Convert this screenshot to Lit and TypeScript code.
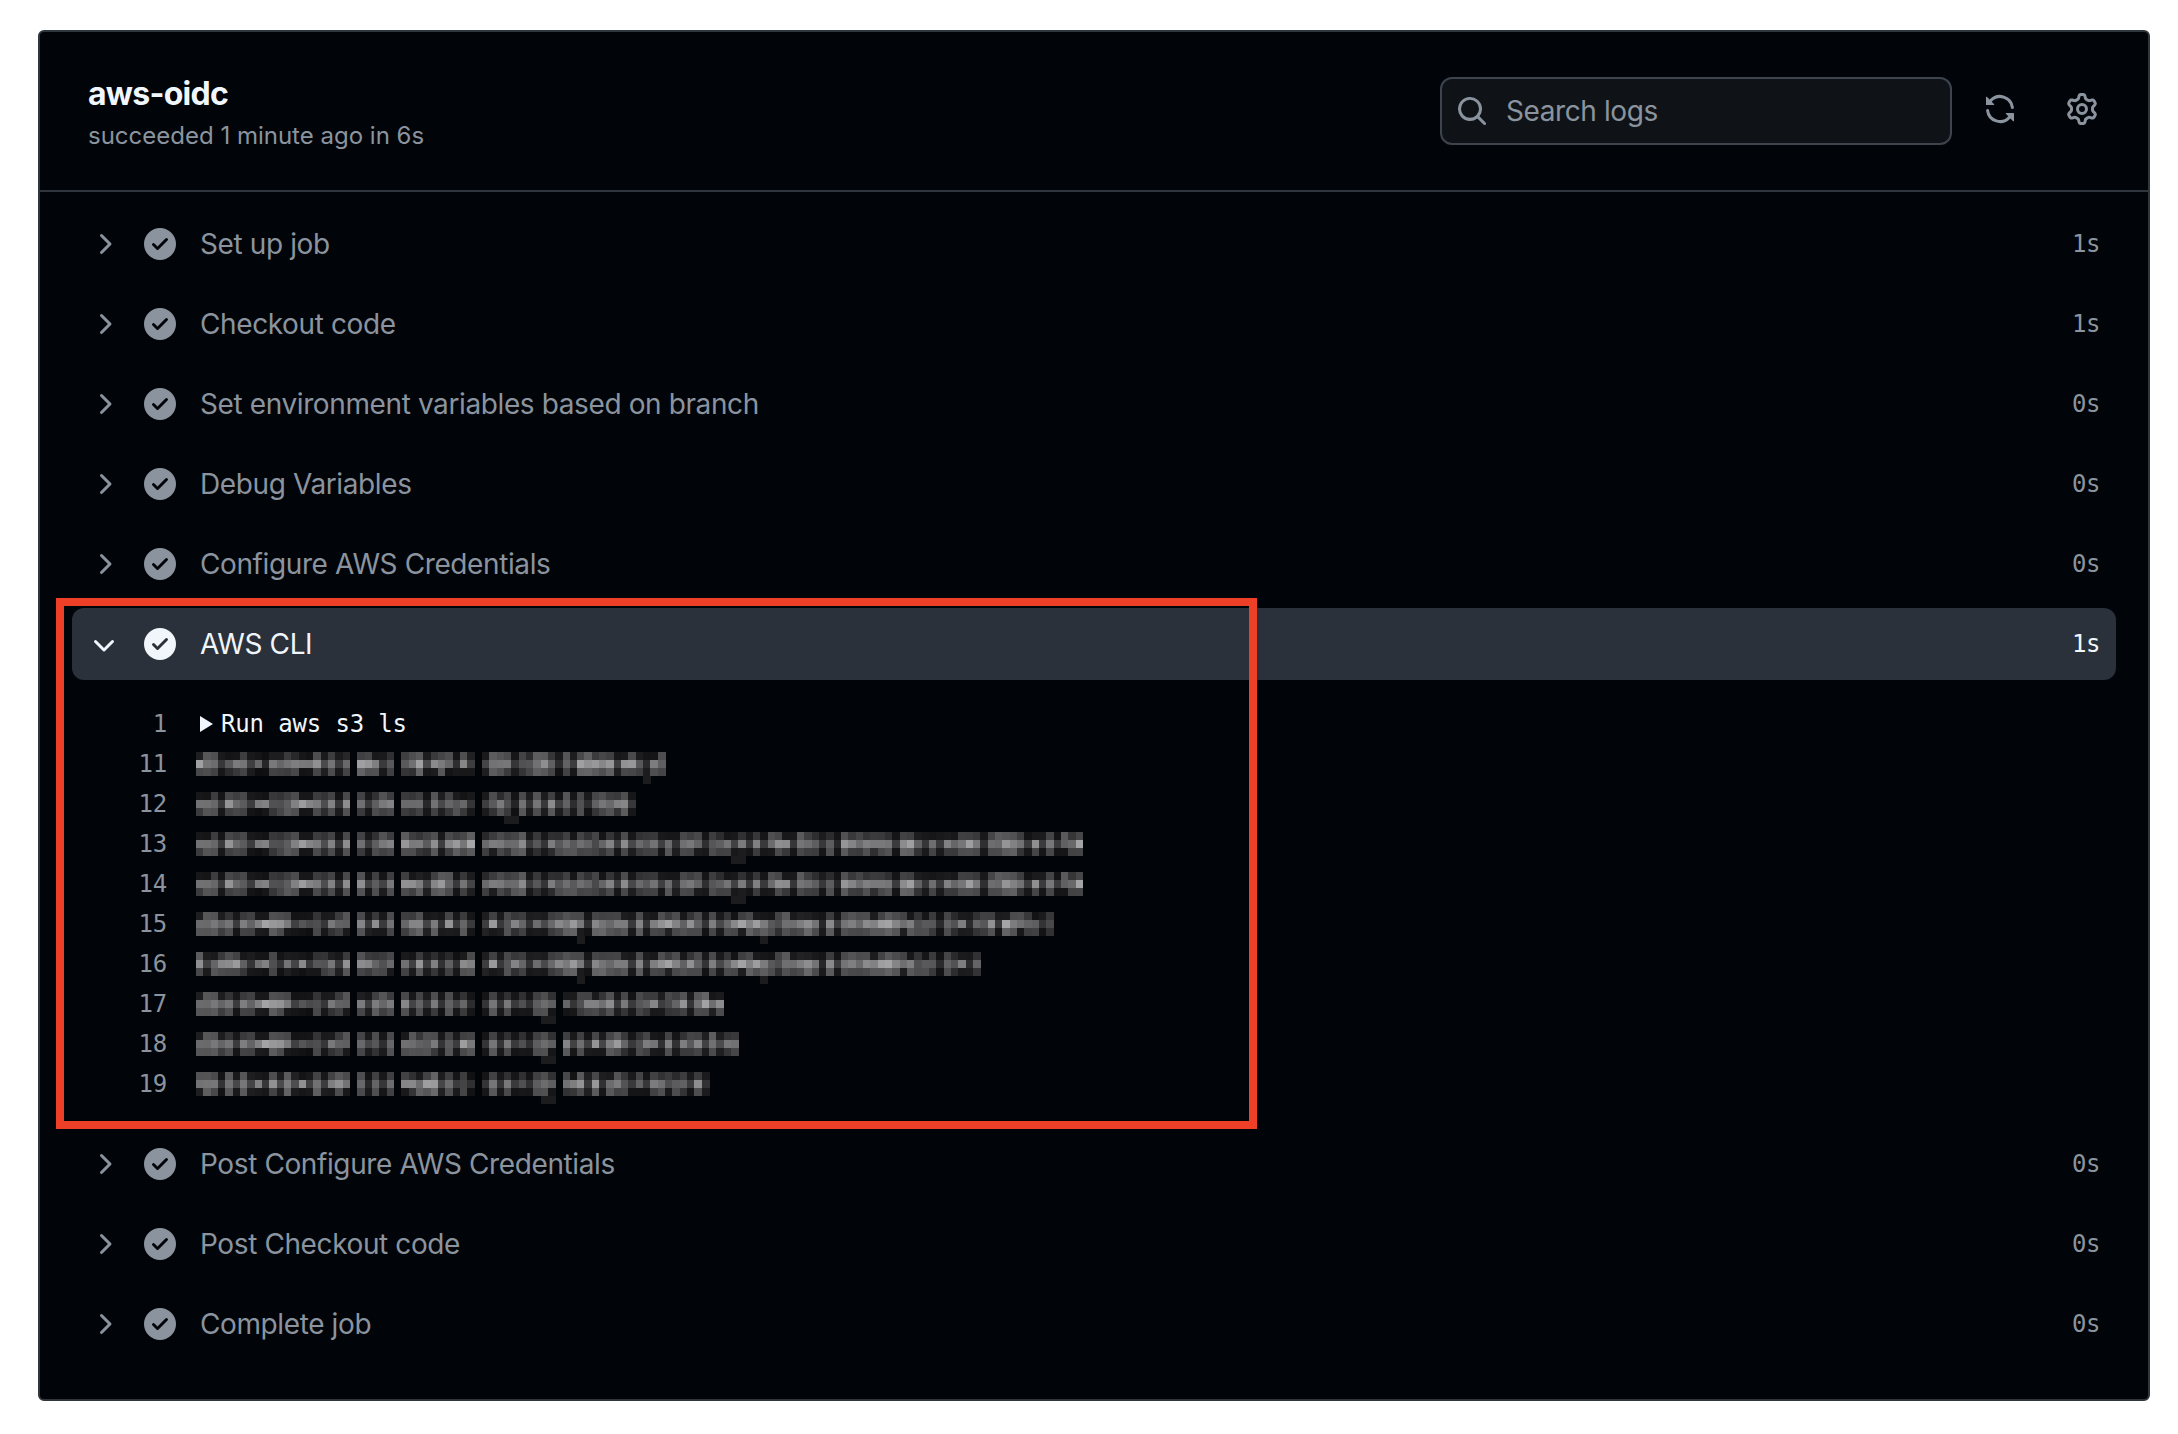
import { LitElement, html, css, svg } from "lit";
import { customElement } from "lit/decorators.js";

const P = {
  check: "M8 16A8 8 0 1 1 8 0a8 8 0 0 1 0 16Zm3.78-9.72a.751.751 0 0 0-.018-1.042.751.751 0 0 0-1.042-.018L6.75 9.19 5.28 7.72a.751.751 0 0 0-1.042.018.751.751 0 0 0-.018 1.042l2 2a.75.75 0 0 0 1.06 0Z",
  right: "M6.22 3.22a.75.75 0 0 1 1.06 0l4.25 4.25a.75.75 0 0 1 0 1.06l-4.25 4.25a.751.751 0 0 1-1.042-.018.751.751 0 0 1-.018-1.042L9.94 8 6.22 4.28a.75.75 0 0 1 0-1.06Z",
  down: "M12.78 5.22a.749.749 0 0 1 0 1.06l-4.25 4.25a.749.749 0 0 1-1.06 0L3.22 6.28a.749.749 0 1 1 1.06-1.06L8 8.939l3.72-3.719a.749.749 0 0 1 1.06 0Z",
  search: "M10.68 11.74a6 6 0 0 1-7.922-8.982 6 6 0 0 1 8.982 7.922l3.04 3.04a.749.749 0 0 1-.326 1.275.749.749 0 0 1-.734-.215ZM11.5 7a4.499 4.499 0 1 0-8.997 0A4.499 4.499 0 0 0 11.5 7Z",
  sync: "M1.705 8.005a.75.75 0 0 1 .834.656 5.5 5.5 0 0 0 9.592 2.97l-1.204-1.204a.25.25 0 0 1 .177-.427h3.646a.25.25 0 0 1 .25.25v3.646a.25.25 0 0 1-.427.177l-1.38-1.38A7.002 7.002 0 0 1 1.05 8.84a.75.75 0 0 1 .656-.834ZM8 2.5a5.487 5.487 0 0 0-4.131 1.869l1.204 1.204A.25.25 0 0 1 4.896 6H1.25A.25.25 0 0 1 1 5.75V2.104a.25.25 0 0 1 .427-.177l1.38 1.38A7.002 7.002 0 0 1 14.95 7.16a.75.75 0 0 1-1.49.178A5.5 5.5 0 0 0 8 2.5Z",
  gear: "M8 0a8.2 8.2 0 0 1 .701.031C9.444.095 9.99.645 10.16 1.29l.288 1.107c.018.066.079.158.212.224.231.114.454.243.668.386.123.082.233.09.299.071l1.103-.303c.644-.176 1.392.021 1.82.63.27.385.506.792.704 1.218.315.675.111 1.422-.364 1.891l-.814.806c-.049.048-.098.147-.088.294.016.257.016.515 0 .772-.01.147.038.246.088.294l.814.806c.475.469.679 1.216.364 1.891a7.977 7.977 0 0 1-.704 1.217c-.428.61-1.176.807-1.82.63l-1.102-.302c-.067-.019-.177-.011-.3.071a5.909 5.909 0 0 1-.668.386c-.133.066-.194.158-.211.224l-.29 1.106c-.168.646-.715 1.196-1.458 1.26a8.006 8.006 0 0 1-1.402 0c-.743-.064-1.289-.614-1.458-1.26l-.289-1.106c-.018-.066-.079-.158-.212-.224a5.738 5.738 0 0 1-.668-.386c-.123-.082-.233-.09-.299-.071l-1.103.303c-.644.176-1.392-.021-1.82-.63a8.12 8.12 0 0 1-.704-1.218c-.315-.675-.111-1.422.363-1.891l.815-.806c.05-.048.098-.147.088-.294a6.214 6.214 0 0 1 0-.772c.01-.147-.038-.246-.088-.294l-.815-.806C.635 6.045.431 5.298.746 4.623a7.92 7.92 0 0 1 .704-1.217c.428-.61 1.176-.807 1.82-.63l1.102.302c.067.019.177.011.3-.071.214-.143.437-.272.668-.386.133-.066.194-.158.211-.224l.29-1.106C6.009.645 6.556.095 7.299.03 7.53.01 7.764 0 8 0Zm-.571 1.525c-.036.003-.108.036-.137.146l-.289 1.105c-.147.561-.549.967-.998 1.189-.173.086-.34.183-.5.29-.417.278-.97.423-1.529.27l-1.103-.303c-.109-.03-.175.016-.195.045-.22.312-.412.644-.573.99-.014.031-.021.11.059.19l.815.806c.411.406.562.957.53 1.456a4.709 4.709 0 0 0 0 .582c.032.499-.119 1.05-.53 1.456l-.815.806c-.081.08-.073.159-.059.19.162.346.353.677.573.989.02.03.085.076.195.046l1.102-.303c.56-.153 1.113-.008 1.53.27.161.107.328.204.501.29.447.222.85.629.997 1.189l.289 1.105c.029.109.101.143.137.146a6.6 6.6 0 0 0 1.142 0c.036-.003.108-.036.137-.146l.289-1.105c.147-.561.549-.967.998-1.189.173-.086.34-.183.5-.29.417-.278.97-.423 1.529-.27l1.103.303c.109.029.175-.016.195-.045.22-.313.411-.644.573-.99.014-.031.021-.11-.059-.19l-.815-.806c-.411-.406-.562-.957-.53-1.456a4.709 4.709 0 0 0 0-.582c-.032-.499.119-1.05.53-1.456l.815-.806c.081-.08.073-.159.059-.19a6.464 6.464 0 0 0-.573-.989c-.02-.03-.085-.076-.195-.046l-1.102.303c-.56.153-1.113.008-1.53-.27a4.44 4.44 0 0 0-.501-.29c-.447-.222-.85-.629-.997-1.189l-.289-1.105c-.029-.11-.101-.143-.137-.146a6.6 6.6 0 0 0-1.142 0ZM11 8a3 3 0 1 1-6 0 3 3 0 0 1 6 0ZM9.5 8a1.5 1.5 0 1 0-3.001.001A1.5 1.5 0 0 0 9.5 8Z",
};

const icon = (d: string, cls: string) =>
  html`<svg class=${cls} viewBox="0 0 16 16" fill="currentColor"><path d=${d}></path></svg>`;

const CW = 7.33;
const CH = 8;
const START = 196;

type Seg = [number, number, number];
interface Blur { n: string; segs: Seg[]; desc: number[]; }

const time = (a: number, b: number, c: number): Seg[] => [
  [196, 348, a],
  [356, 395, b],
  [404, 476, c],
];

const blurs: Blur[] = [
  { n: "11", segs: [...time(3, 11, 12), [484, 668, 21]], desc: [640] },
  { n: "12", segs: [...time(1, 13, 14), [484, 636, 22]], desc: [509, 502] },
  { n: "13", segs: [...time(1, 13, 15), [484, 1084, 23]], desc: [738, 731] },
  { n: "14", segs: [...time(1, 16, 17), [484, 1084, 23]], desc: [738, 731] },
  { n: "15", segs: [...time(2, 18, 19), [484, 1052, 24]], desc: [575, 760] },
  { n: "16", segs: [...time(4, 20, 25), [484, 981, 24]], desc: [575, 760] },
  { n: "17", segs: [...time(2, 26, 27), [484, 556, 28], [564, 724, 29]], desc: [545, 538] },
  { n: "18", segs: [...time(2, 30, 31), [484, 556, 28], [564, 739, 32]], desc: [545, 538] },
  { n: "19", segs: [...time(5, 33, 34), [484, 556, 28], [564, 707, 35]], desc: [545, 538] },
];

const rnd = (a: number, b: number, c: number) => {
  const v = Math.sin(a * 127.1 + b * 311.7 + c * 74.7) * 43758.5453;
  return v - Math.floor(v);
};

const cell = (col: number, row: number, g: number) =>
  svg`<rect x=${(col * CW).toFixed(2)} y=${row * CH} width=${CW + 0.4} height=${CH}
    fill=${`rgb(${g},${g},${g + 3})`}></rect>`;

/* Hyphen columns of the date: only the middle band carries any ink there. */
const isHyphen = (c: number) => c === 8 || c === 9 || c === 14 || c === 15;

function mosaic(b: Blur) {
  const cells: unknown[] = [];
  for (const [from, to, seed] of b.segs) {
    const c0 = Math.round((from - START) / CW);
    const c1 = Math.round((to - START) / CW);
    const inDate = c0 === 0;
    for (let c = c0; c < c1; c++) {
      const charTone = rnd(seed, Math.floor(c / 2), 9);
      const gapCol = c % 2 === 1 && rnd(seed, c, 7) < 0.55;
      for (let r = 0; r < 3; r++) {
        const v = 0.55 * rnd(seed, c, r) + 0.45 * charTone;
        let g: number;
        if (r === 1) {
          g = gapCol ? 34 + v * 45 : 66 + v * 105;
        } else if (inDate && isHyphen(c)) {
          g = 14 + v * 14;
        } else if (gapCol || rnd(seed, c, r + 5) < 0.16) {
          g = 16 + v * 18;
        } else {
          g = (r === 0 ? 36 : 40) + v * 66;
        }
        cells.push(cell(c, r, Math.round(g)));
      }
    }
  }
  for (const x of b.desc) cells.push(cell(Math.round((x - START) / CW), 3, 28));
  const w = Math.ceil(Math.max(...b.segs.map((s) => s[1])) - START + 4);
  return html`<svg class="blur" width=${w} height="32" viewBox="0 0 ${w} 32" shape-rendering="crispEdges">${cells}</svg>`;
}

const before: [string, string][] = [
  ["Set up job", "1s"],
  ["Checkout code", "1s"],
  ["Set environment variables based on branch", "0s"],
  ["Debug Variables", "0s"],
  ["Configure AWS Credentials", "0s"],
];
const after: [string, string][] = [
  ["Post Configure AWS Credentials", "0s"],
  ["Post Checkout code", "0s"],
  ["Complete job", "0s"],
];

@customElement("app-root")
export class AppRoot extends LitElement {
  static styles = css`
    :host {
      display: block;
      position: relative;
      background: #fff;
      padding: 30px 28px 33px 38px;
      font-family: Inter, "Liberation Sans", sans-serif;
      color: #8b949e;
    }
    .card {
      background: #010409;
      border: 2px solid #30363d;
      border-radius: 6px;
      height: 1371px;
      box-sizing: border-box;
    }
    .head {
      height: 160px;
      box-sizing: border-box;
      border-bottom: 2px solid #30363d;
      display: flex;
      align-items: center;
      padding: 0 50px 0 48px;
    }
    .titles {
      flex: 1;
      margin-top: 8px;
    }
    .title {
      font-size: 32px;
      line-height: 40px;
      font-weight: 700;
      color: #f0f6fc;
      letter-spacing: -0.75px;
    }
    .sub {
      font-size: 24px;
      line-height: 42px;
      padding-top: 1px;
      letter-spacing: 0;
    }
    .search {
      width: 512px;
      height: 68px;
      box-sizing: border-box;
      background: #0f1318;
      border: 2px solid #3d444d;
      border-radius: 12px;
      display: flex;
      align-items: center;
      padding-left: 14px;
      gap: 18px;
      font-size: 28px;
      letter-spacing: -0.4px;
    }
    .i32 {
      width: 32px;
      height: 32px;
      flex: none;
      display: block;
    }
    .lower {
      position: relative;
      top: 2px;
    }
    .acts {
      display: flex;
      margin-left: 32px;
      gap: 50px;
      margin-bottom: 4px;
    }
    .list {
      padding: 16px 32px 0;
    }
    .row {
      height: 72px;
      margin-bottom: 8px;
      border-radius: 12px;
      display: flex;
      align-items: center;
      padding: 0 16px 0 16px;
      gap: 24px;
      font-size: 28px;
      letter-spacing: -0.39px;
    }
    .row.on {
      background: #2b313b;
      color: #f0f6fc;
      margin-bottom: 0;
    }
    .name {
      flex: 1;
    }
    .t {
      font-family: "DejaVu Sans Mono", "Liberation Mono", monospace;
      font-size: 24px;
      letter-spacing: -0.4px;
    }
    .log {
      padding: 24px 0;
      font-family: "DejaVu Sans Mono", "Liberation Mono", monospace;
      font-size: 24px;
      letter-spacing: -0.15px;
    }
    .line {
      height: 40px;
      display: flex;
      line-height: 40px;
    }
    .num {
      width: 95px;
      text-align: right;
      flex: none;
    }
    .txt {
      margin-left: 33px;
      display: flex;
      align-items: center;
      color: #f0f6fc;
    }
    .tri {
      width: 13px;
      height: 16px;
      margin-right: 8px;
      display: block;
    }
    .blur {
      display: block;
      margin: 8px 0 0 29px;
    }
    .mark {
      position: absolute;
      left: 56px;
      top: 598px;
      width: 1201px;
      height: 531px;
      box-sizing: border-box;
      border: 8px solid #ee4026;
      pointer-events: none;
    }
  `;

  private step(s: [string, string]) {
    return html`<div class="row">
      ${icon(P.right, "i32")}${icon(P.check, "i32")}
      <span class="name">${s[0]}</span><span class="t">${s[1]}</span>
    </div>`;
  }

  render() {
    return html`
      <div class="card">
        <div class="head">
          <div class="titles">
            <div class="title">aws-oidc</div>
            <div class="sub">succeeded 1 minute ago in 6s</div>
          </div>
          <div class="search">${icon(P.search, "i32")}<span>Search logs</span></div>
          <div class="acts">${icon(P.sync, "i32")}${icon(P.gear, "i32")}</div>
        </div>
        <div class="list">
          ${before.map((s) => this.step(s))}
          <div class="row on">
            ${icon(P.down, "i32 lower")}${icon(P.check, "i32")}
            <span class="name">AWS CLI</span><span class="t">1s</span>
          </div>
          <div class="log">
            <div class="line">
              <span class="num">1</span>
              <span class="txt">
                <svg class="tri" viewBox="0 0 13 16"><path d="M0 0L13 8L0 16Z" fill="#f0f6fc"></path></svg>Run aws s3 ls
              </span>
            </div>
            ${blurs.map(
              (b) => html`<div class="line"><span class="num">${b.n}</span>${mosaic(b)}</div>`
            )}
          </div>
          ${after.map((s) => this.step(s))}
        </div>
      </div>
      <div class="mark"></div>
    `;
  }
}
